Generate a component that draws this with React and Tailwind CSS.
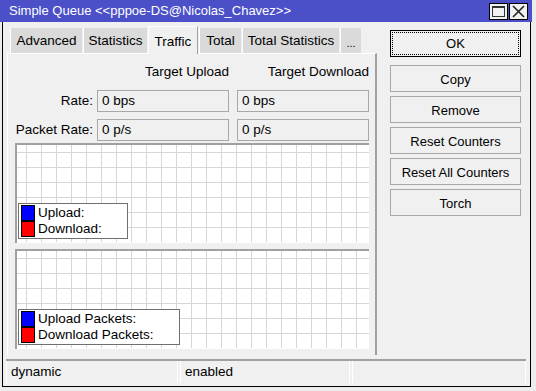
import React from "react";

const tabs = ["Advanced", "Statistics", "Traffic", "Total", "Total Statistics", "..."]
const tabWidths = [72, 64, 50, 42, 97, 21]
const buttons = ["Copy", "Remove", "Reset Counters", "Reset All Counters", "Torch"]

function Grid() {
    const xs = []
    for (let x = 9; x < 352; x += 15) xs.push(x)
    const ys = []
    for (let y = 7; y < 98; y += 15) ys.push(y)
    return (
        <svg className="absolute inset-0" width="352" height="97">
            {xs.map(x => <line key={"x" + x} x1={x + 0.5} y1="0" x2={x + 0.5} y2="97" stroke="#d6d6d6"/>)}
            {ys.map(y => <line key={"y" + y} x1="0" y1={y + 0.5} x2="352" y2={y + 0.5} stroke="#d6d6d6"/>)}
        </svg>
    )
}

function Graph({up, down, legendW}) {
    return (
        <div className="w-[354px] h-[100px] border-t-2 border-l-2 border-t-[#a0a0a0] border-l-[#a0a0a0] bg-white relative">
            <Grid/>
            <div className="absolute left-[1px] bottom-[4px] bg-white border border-[#707070] px-[2px] py-[1px] flex flex-col"
                 style={{width: legendW}}>
                <div className="flex items-center h-[16px]">
                    <span className="w-[14px] h-[16px] bg-[#0000ff] border border-black"/>
                    <span className="ml-[3px] leading-none">{up}</span>
                </div>
                <div className="flex items-center h-[16px]">
                    <span className="w-[14px] h-[16px] bg-[#ff0000] border border-black"/>
                    <span className="ml-[3px] leading-none">{down}</span>
                </div>
            </div>
        </div>
    )
}

function Field({value}) {
    return (
        <div className="w-[132px] h-[22px] border border-[#a8a8a8] bg-[#f0f0f0] flex items-center pl-[4px]">
            {value}
        </div>
    )
}

export default function App() {
    return (
        <div className="w-[536px] h-[391px] bg-[#ececec] overflow-hidden text-[13.5px] text-black"
             style={{fontFamily: '"Liberation Sans", Arial, sans-serif'}}>
            <div className="w-[532px] flex flex-col">
                {/* title bar */}
                <div className="h-[22px] bg-[#4b50c8] flex items-center pl-[9px] pr-[4px] text-white text-[13px]">
                    <span className="flex-1 whitespace-nowrap">Simple Queue &lt;&lt;pppoe-DS@Nicolas_Chavez&gt;&gt;</span>
                    <div className="w-[19px] h-[17px] bg-[#f0f0f0] border border-black flex items-center justify-center">
                        <span className="w-[13px] h-[11px] border border-[#333] border-t-2"/>
                    </div>
                    <div className="w-[19px] h-[17px] ml-[1px] bg-[#f0f0f0] border border-black flex items-center justify-center">
                        <svg width="13" height="13" viewBox="0 0 13 13">
                            <path d="M1 1L12 12M12 1L1 12" stroke="#222" strokeWidth="1.6"/>
                        </svg>
                    </div>
                </div>
                {/* body */}
                <div className="ml-[2px] w-[529px] h-[365px] border-x border-b border-black bg-[#f0f0f0] flex flex-col">
                    <div className="flex">
                        <div className="flex flex-col pl-[4px] pt-[3px]">
                            <div className="flex items-end h-[28px] pl-[3px]">
                                {tabs.map((t, i) => (
                                    t === "Traffic" ? (
                                        <div key={t}
                                             className="h-[28px] bg-[#f0f0f0] border-t border-l border-white border-r border-r-[#a0a0a0] flex items-start justify-center pt-[5px] mr-[1px] relative z-10 -mb-[1px]"
                                             style={{width: tabWidths[i]}}>
                                            {t}
                                        </div>
                                    ) : (
                                        <div key={t}
                                             className={`h-[25px] bg-[#dadada] border-l border-white flex items-center justify-center mr-[1px] ${t === "..." ? "text-[11px] pt-[5px]" : "pt-[2px]"}`}
                                             style={{width: tabWidths[i]}}>
                                            {t}
                                        </div>
                                    )
                                ))}
                            </div>
                            {/* panel */}
                            <div className="w-[370px] h-[302px] border-t border-l border-white border-r-2 border-r-[#a0a0a0] pl-[7px] flex flex-col">
                                <div className="flex h-[36px] items-end pb-[8px]">
                                    <div className="w-[214px] text-right">Target Upload</div>
                                    <div className="w-[140px] text-right">Target Download</div>
                                </div>
                                <div className="flex items-center h-[22px]">
                                    <div className="w-[78px] text-right mr-[4px]">Rate:</div>
                                    <Field value="0 bps"/>
                                    <div className="w-[8px]"/>
                                    <Field value="0 bps"/>
                                </div>
                                <div className="flex items-center h-[22px] mt-[7px]">
                                    <div className="w-[78px] text-right mr-[4px] whitespace-nowrap">Packet Rate:</div>
                                    <Field value="0 p/s"/>
                                    <div className="w-[8px]"/>
                                    <Field value="0 p/s"/>
                                </div>
                                <div className="mt-[2px]">
                                    <Graph up="Upload:" down="Download:" legendW={110}/>
                                </div>
                                <div className="mt-[6px]">
                                    <Graph up="Upload Packets:" down="Download Packets:" legendW={162}/>
                                </div>
                            </div>
                        </div>
                        {/* buttons */}
                        <div className="ml-[13px] pt-[8px] flex flex-col w-[131px] text-[13px]">
                            <div className="h-[27px] border border-black p-[1px]">
                                <div className="h-full border border-dotted border-black flex items-center justify-center pt-[1px]">OK</div>
                            </div>
                            <div className="flex flex-col gap-[4px] mt-[8px]">
                                {buttons.map(b => (
                                    <div key={b}
                                         className="h-[27px] border border-[#a8a8a8] bg-[#f0f0f0] flex items-center justify-center pt-[2px]">
                                        {b}
                                    </div>
                                ))}
                            </div>
                        </div>
                    </div>
                    {/* status bar */}
                    <div className="mt-[4px] ml-[3px] w-[520px] h-[24px] border-t-2 border-[#a0a0a0] flex">
                        <div className="w-[172px] border-r border-l border-white flex items-center pl-[4px]">dynamic</div>
                        <div className="w-[170px] ml-[2px] border-x border-white flex items-center pl-[4px]">enabled</div>
                        <div className="flex-1 ml-[2px] border-x border-white"/>
                    </div>
                </div>
            </div>
        </div>
    );
}
